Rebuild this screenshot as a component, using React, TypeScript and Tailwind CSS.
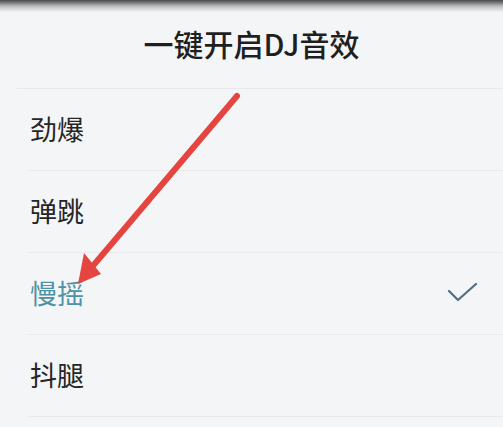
import React from 'react';

const modes = [
  { name: '劲爆', active: false },
  { name: '弹跳', active: false },
  { name: '慢摇', active: true },
  { name: '抖腿', active: false },
];

const font = { fontFamily: '"Noto Sans CJK SC", "Noto Sans", sans-serif' };

export default function App() {
  return (
    <div className="relative w-[503px] h-[427px] overflow-hidden bg-[#f4f5f7]" style={font}>
      {/* blurred top edge */}
      <div className="h-[12px] bg-gradient-to-b from-[#4a4a4c] via-[#b9babd] to-[#f4f5f7]" />

      <div className="flex h-[77px] items-center justify-center border-b border-[#e7e9ec] ml-[17px] mr-0">
        <h1 className="text-[30px] font-medium leading-none text-[#1f1f1f] -ml-[17px] -mt-[14px]">一键开启DJ音效</h1>
      </div>

      <ul>
        {modes.map((m) => (
          <li key={m.name} className="flex h-[82px] items-center justify-between ml-[27px] border-b border-[#e7e9ec]">
            <span className={`text-[27px] leading-none ml-[3px] -mt-[3px] ${m.active ? 'text-[#4c93a6]' : 'text-[#262626]'}`}>
              {m.name}
            </span>
            {m.active && (
              <svg width="32" height="22" viewBox="0 0 32 22" className="mr-[24px]">
                <path d="M2 8 L11 17 L29 1" fill="none" stroke="#4f6f85" strokeWidth="2.2" strokeLinecap="round" strokeLinejoin="round" />
              </svg>
            )}
          </li>
        ))}
      </ul>

      {/* annotation arrow */}
      <svg className="absolute inset-0 pointer-events-none" width="503" height="427" viewBox="0 0 503 427">
        <line x1="237" y1="96" x2="92" y2="267" stroke="#e4463f" strokeWidth="6" strokeLinecap="round" />
        <polygon points="78,284 84,253 101,274" fill="#e4463f" />
      </svg>
    </div>
  );
}
